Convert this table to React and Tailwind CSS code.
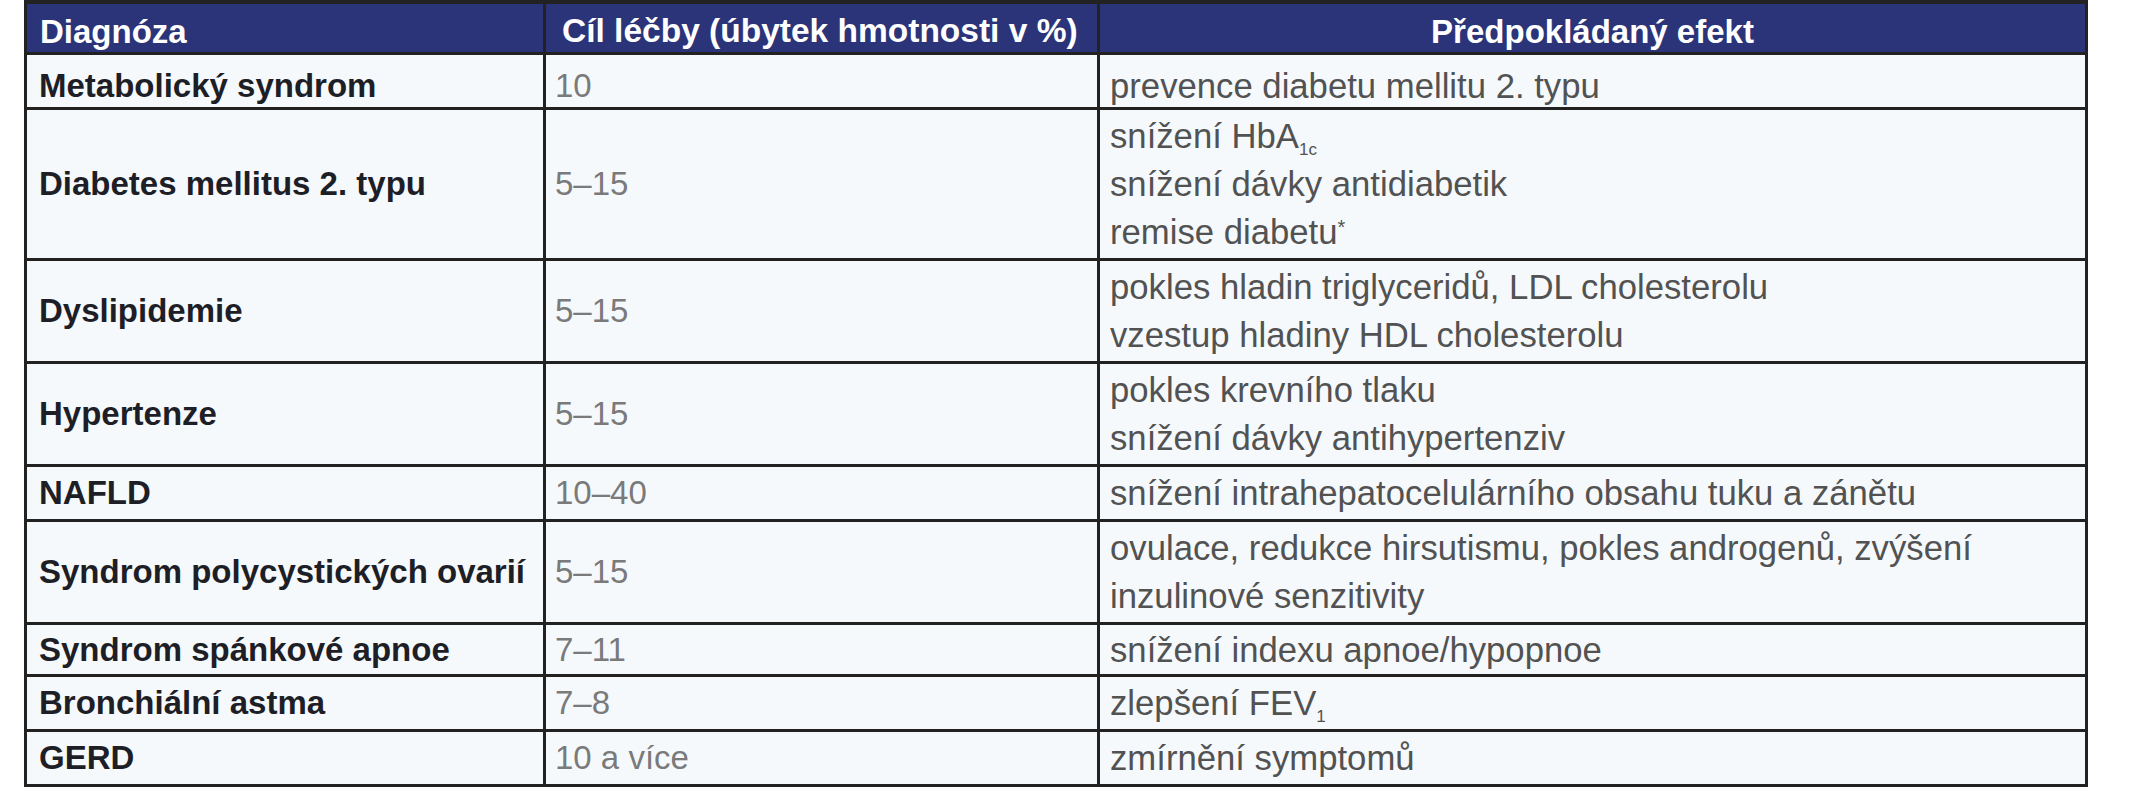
import React from 'react';

const rows = [
  { d: 'Metabolický syndrom', c: '10', e: ['prevence diabetu mellitu 2. typu'], pad: 'pt-[10px] pb-0 leading-[42px]' },
  {
    d: 'Diabetes mellitus 2. typu',
    c: '5–15',
    e: [
      <>snížení HbA<sub className="text-[17px] bottom-[-7px]">1c</sub></>,
      'snížení dávky antidiabetik',
      <>remise diabetu<sup className="text-[20px]">*</sup></>,
    ],
  },
  { d: 'Dyslipidemie', c: '5–15', e: ['pokles hladin triglyceridů, LDL cholesterolu', 'vzestup hladiny HDL cholesterolu'] },
  { d: 'Hypertenze', c: '5–15', e: ['pokles krevního tlaku', 'snížení dávky antihypertenziv'] },
  { d: 'NAFLD', c: '10–40', e: ['snížení intrahepatocelulárního obsahu tuku a zánětu'] },
  {
    d: 'Syndrom polycystických ovarií',
    c: '5–15',
    e: ['ovulace, redukce hirsutismu, pokles androgenů, zvýšení', 'inzulinové senzitivity'],
  },
  { d: 'Syndrom spánkové apnoe', c: '7–11', e: ['snížení indexu apnoe/hypopnoe'], pad: 'pt-[1px] pb-0 leading-[48px]' },
  { d: 'Bronchiální astma', c: '7–8', e: [<>zlepšení FEV<sub className="text-[17px] bottom-[-7px]">1</sub></>] },
  { d: 'GERD', c: '10 a více', e: ['zmírnění symptomů'] },
];

const App = () => {
  return (
    <div className="bg-white pl-[24px] font-['Liberation_Sans',Arial,sans-serif]">
      <div className="grid w-[2064px] grid-cols-[516px_551px_985px] gap-[3px] bg-[#222222] p-[3px] pt-[4px]">
        {/* Header */}
        <div className="flex h-[48px] items-center bg-[#2b3479] pl-[13px] pt-[7px] text-[33px] font-bold text-white">
          Diagnóza
        </div>
        <div className="flex h-[48px] items-center bg-[#2b3479] pl-[16px] pt-[7px] text-[33.5px] font-bold text-white">
          Cíl léčby (úbytek hmotnosti v %)
        </div>
        <div className="flex h-[48px] items-center justify-center bg-[#2b3479] pt-[7px] text-[33px] font-bold text-white">
          Předpokládaný efekt
        </div>

        {/* Body */}
        {rows.map((row, i) => {
          const pad = row.pad || 'py-[2px] leading-[48px]';
          return (
            <React.Fragment key={i}>
              <div className={`flex items-center bg-[#f5f9fc] pl-[12px] text-[33px] font-bold text-[#1e1e26] ${pad}`}>
                {row.d}
              </div>
              <div className={`flex items-center bg-[#f5f9fc] pl-[9px] text-[33px] text-[#7a7a7a] ${pad}`}>
                {row.c}
              </div>
              <div className={`flex flex-col justify-center bg-[#f5f9fc] pl-[10px] text-[34.7px] text-[#525252] ${pad}`}>
                {row.e.map((line, j) => (
                  <div key={j} className="whitespace-nowrap">
                    {line}
                  </div>
                ))}
              </div>
            </React.Fragment>
          );
        })}
      </div>
    </div>
  );
};

export default App;
